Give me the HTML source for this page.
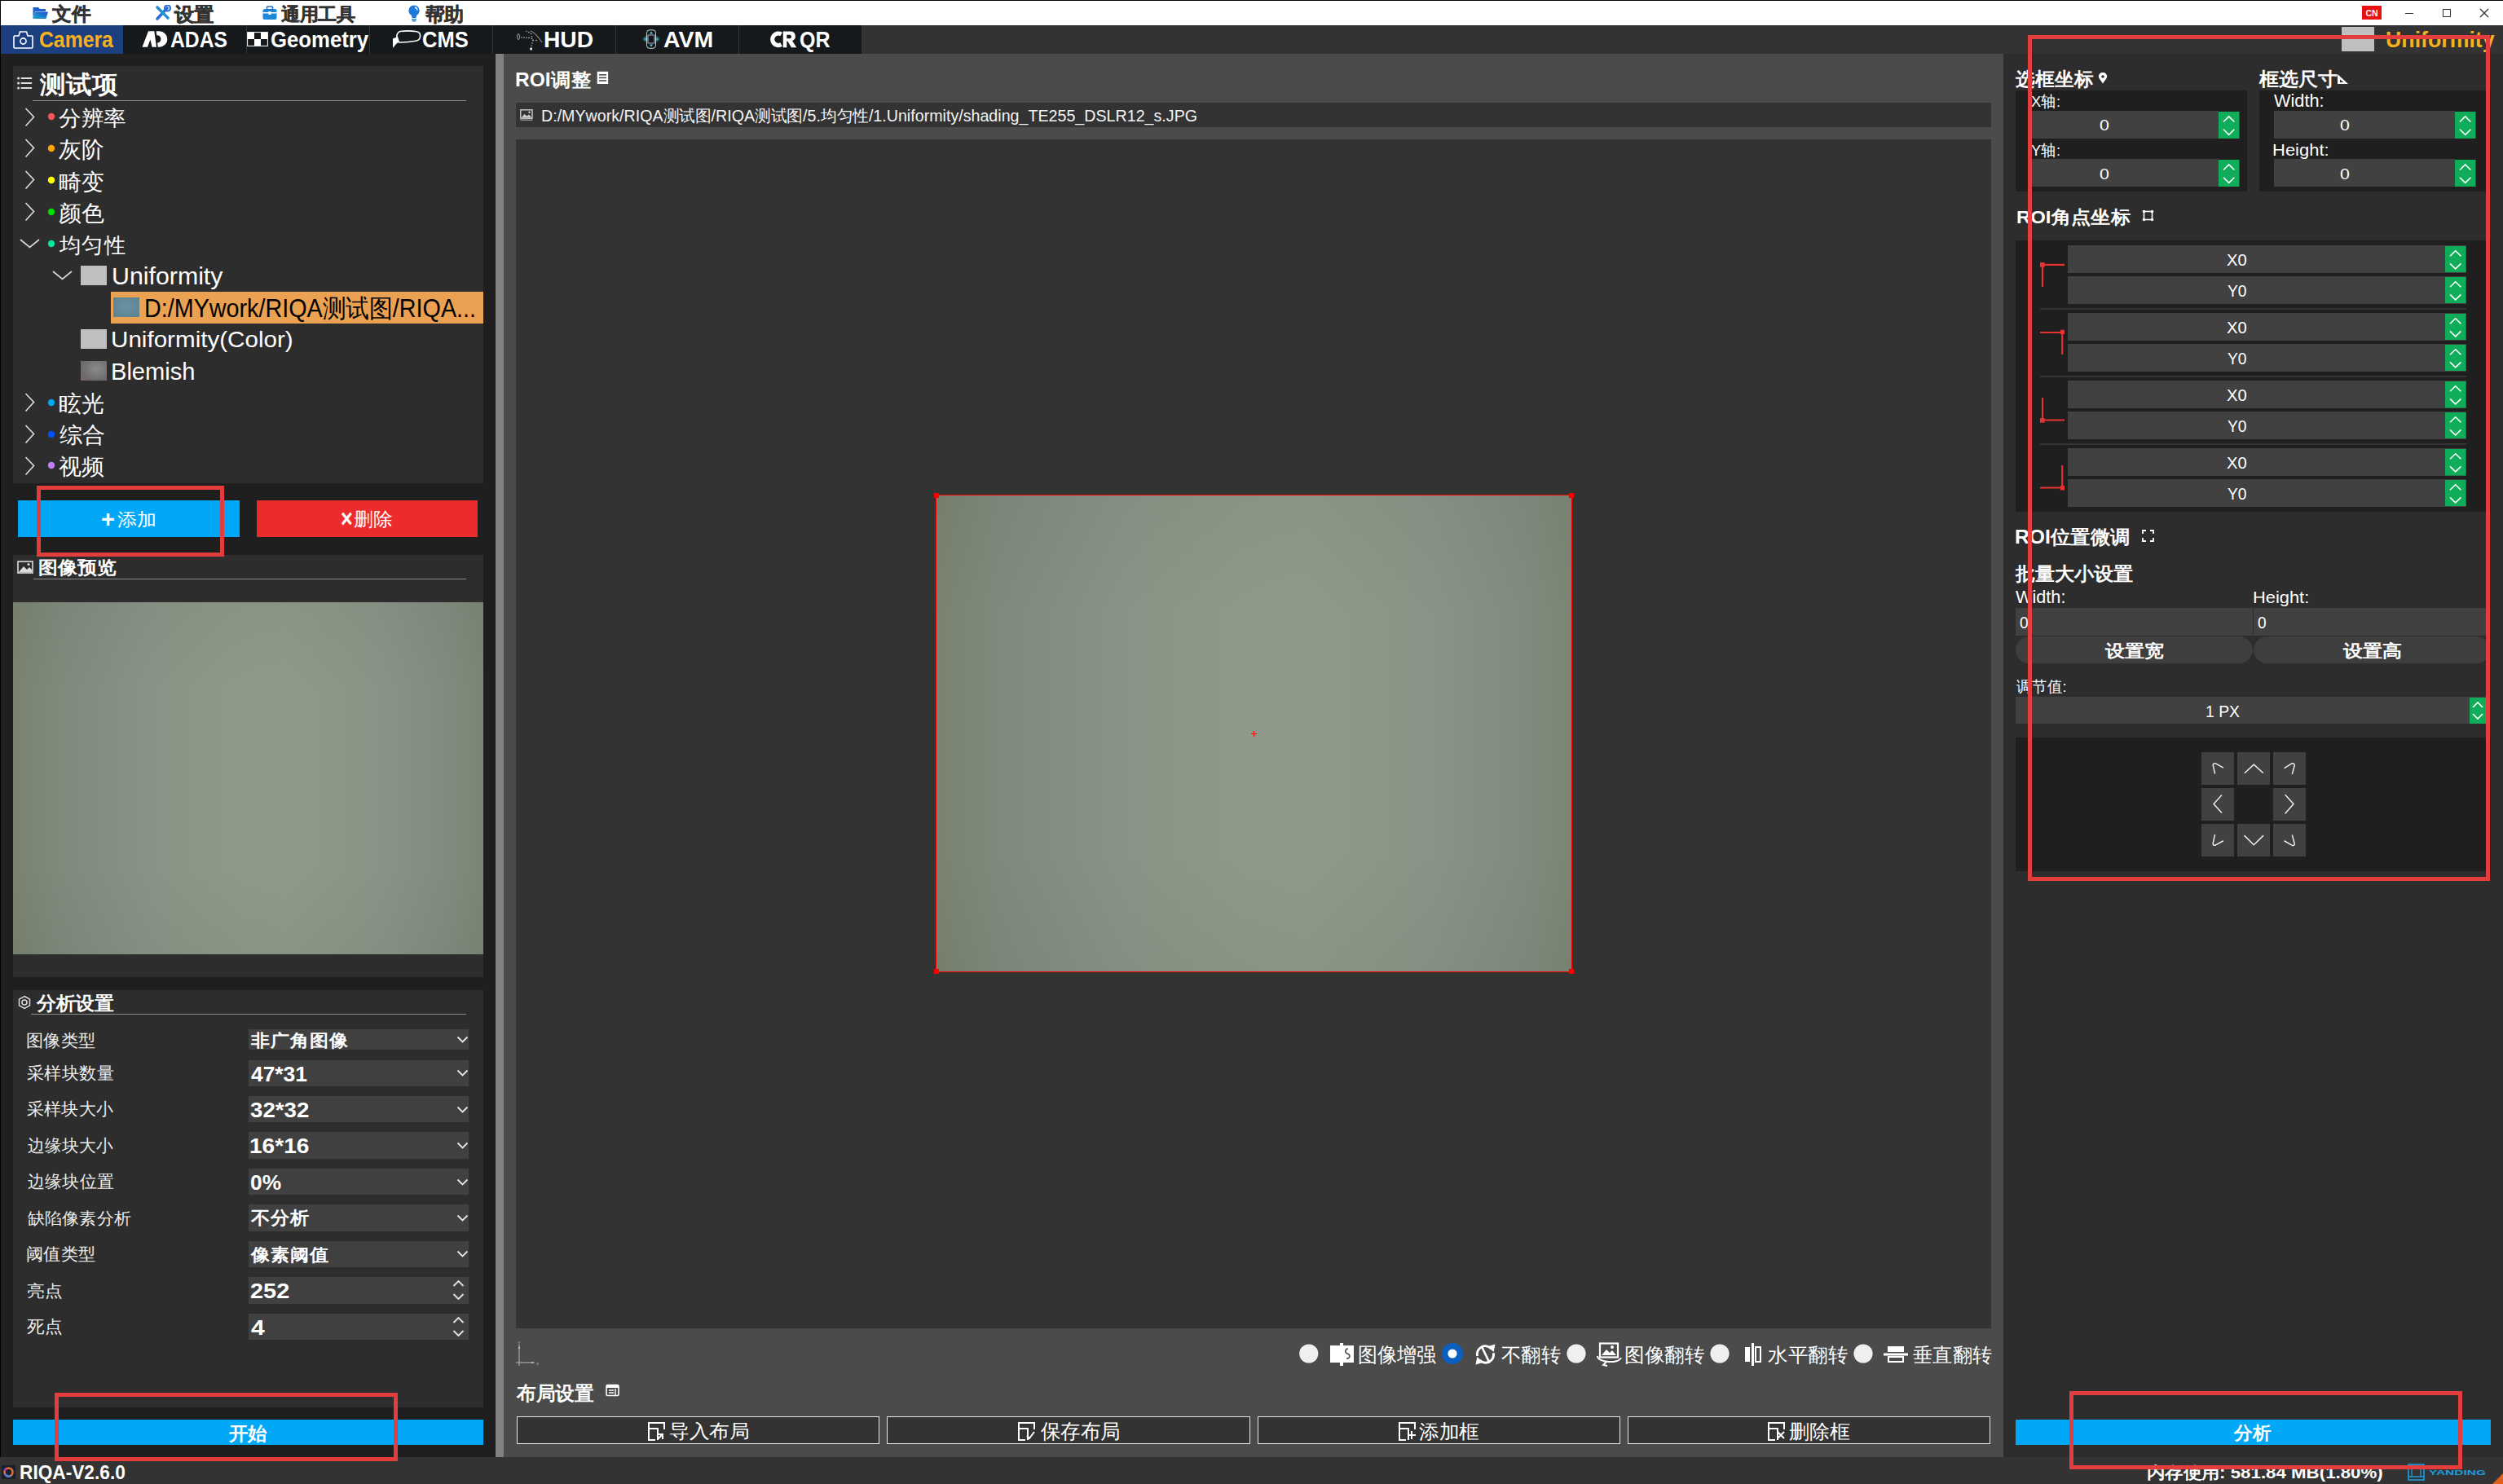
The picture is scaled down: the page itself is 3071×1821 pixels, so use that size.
<!DOCTYPE html>
<html><head><meta charset="utf-8">
<style>
*{box-sizing:border-box;margin:0;padding:0}
html,body{width:3071px;height:1821px;overflow:hidden;background:#1f1f1f;font-family:"Liberation Sans",sans-serif;color:#fff}
.a{position:absolute;display:block}
.t{position:absolute;white-space:nowrap;line-height:1;transform-origin:0 0;font-family:"Liberation Sans",sans-serif}
</style></head><body>
<div class="a" style="left:0px;top:0px;width:3071px;height:1px;background:#000;"></div>
<div class="a" style="left:0px;top:0px;width:1px;height:1788px;background:#000;"></div>
<div class="a" style="left:1px;top:1px;width:3070px;height:30px;background:#fff;"></div>
<div class="a" style="left:1px;top:31px;width:3070px;height:35px;background:#333333;"></div>
<div class="a" style="left:1px;top:31px;width:1056px;height:35px;background:#15191c;"></div>
<div class="a" style="left:1px;top:31px;width:150px;height:35px;background:#1c3f80;"></div>
<div class="a" style="left:302px;top:31px;width:1px;height:35px;background:#30363a;"></div>
<div class="a" style="left:453px;top:31px;width:1px;height:35px;background:#30363a;"></div>
<div class="a" style="left:604px;top:31px;width:1px;height:35px;background:#30363a;"></div>
<div class="a" style="left:755px;top:31px;width:1px;height:35px;background:#30363a;"></div>
<div class="a" style="left:906px;top:31px;width:1px;height:35px;background:#30363a;"></div>
<div class="a" style="left:1px;top:66px;width:607px;height:1722px;background:#1f1f1f;"></div>
<div class="a" style="left:16px;top:81px;width:577px;height:512px;background:#2d2d2d;"></div>
<div class="a" style="left:22px;top:614px;width:272px;height:45px;background:#02a8f8;"></div>
<div class="a" style="left:315px;top:614px;width:271px;height:45px;background:#ec2c2c;"></div>
<div class="a" style="left:16px;top:681px;width:577px;height:518px;background:#2d2d2d;"></div>
<div class="a" style="left:16px;top:739px;width:577px;height:432px;background:linear-gradient(180deg,rgba(60,60,50,0.06) 0%,rgba(0,0,0,0) 25%,rgba(0,0,0,0) 75%,rgba(60,60,50,0.06) 100%),linear-gradient(90deg,#79836f 0%,#808a7c 10%,#8a9486 30%,#8e9989 48%,#8f9a8a 58%,#8a9486 78%,#828c7e 92%,#7b8576 100%);"></div>
<div class="a" style="left:16px;top:1215px;width:577px;height:512px;background:#2d2d2d;"></div>
<div class="a" style="left:16px;top:1742px;width:577px;height:31px;background:#02a8f8;"></div>
<div class="a" style="left:608px;top:66px;width:10px;height:1722px;background:#818181;"></div>
<div class="a" style="left:618px;top:66px;width:1840px;height:1722px;background:#4b4b4b;"></div>
<div class="a" style="left:633px;top:126px;width:1810px;height:30px;background:#333;"></div>
<div class="a" style="left:633px;top:171px;width:1810px;height:1459px;background:#333;"></div>
<div class="a" style="left:2458px;top:66px;width:613px;height:1722px;background:#2d2d2d;"></div>
<div class="a" style="left:2473px;top:1742px;width:583px;height:31px;background:#02a8f8;"></div>
<div class="a" style="left:0px;top:1788px;width:3071px;height:33px;background:#333;"></div>
<div class="t" style="left:63.50px;top:6.00px;font-size:23.0px;font-weight:bold;color:#333;transform:scale(1.0261,1.0000);-webkit-text-stroke:0.5px #333">文件</div>
<div class="t" style="left:214.00px;top:6.50px;font-size:23.0px;font-weight:bold;color:#333;transform:scale(1.0370,1.0227);-webkit-text-stroke:0.5px #333">设置</div>
<div class="t" style="left:344.60px;top:7.48px;font-size:22.0px;font-weight:bold;color:#333;transform:scale(1.0273,0.9783);-webkit-text-stroke:0.5px #333">通用工具</div>
<div class="t" style="left:521.70px;top:6.50px;font-size:23.0px;font-weight:bold;color:#333;transform:scale(1.0178,1.0227);-webkit-text-stroke:0.5px #333">帮助</div>
<div class="t" style="left:48.10px;top:35.00px;font-size:27.5px;font-weight:bold;color:#f5b21b;transform:scale(0.9000,1.0000);">Camera</div>
<div class="t" style="left:209.49px;top:36.43px;font-size:27.0px;font-weight:bold;color:#fff;transform:scale(0.9147,0.9895);">ADAS</div>
<div class="t" style="left:331.75px;top:36.43px;font-size:27.0px;font-weight:bold;color:#fff;transform:scale(0.9528,0.9895);">Geometry</div>
<div class="t" style="left:517.65px;top:36.43px;font-size:27.0px;font-weight:bold;color:#fff;transform:scale(0.9466,0.9895);">CMS</div>
<div class="t" style="left:666.91px;top:36.43px;font-size:27.0px;font-weight:bold;color:#fff;transform:scale(1.0436,0.9895);">HUD</div>
<div class="t" style="left:814.23px;top:35.76px;font-size:26.5px;font-weight:bold;color:#fff;transform:scale(1.0741,1.0111);">AVM</div>
<div class="t" style="left:980.66px;top:35.76px;font-size:26.5px;font-weight:bold;color:#fff;transform:scale(0.9447,1.0111);">QR</div>
<div class="t" style="left:49.40px;top:89.20px;font-size:30.0px;font-weight:bold;color:#fff;transform:scale(1.0600,1.0067);">测试项</div>
<div class="a" style="left:40px;top:123px;width:532px;height:1px;background:#8c8c8c;"></div>
<svg class="a" style="left:20px;top:94px" width="20" height="16" viewBox="0 0 20 16"><g fill="#ddd"><circle cx="2.6" cy="2" r="1.5"/><circle cx="2.6" cy="8" r="1.5"/><circle cx="2.6" cy="14" r="1.5"/><rect x="5.6" y="1" width="13.5" height="2"/><rect x="5.6" y="7" width="13.5" height="2"/><rect x="5.6" y="13" width="13.5" height="2"/></g></svg>
<div class="t" style="left:71.97px;top:132.76px;font-size:26.5px;font-weight:normal;color:#fff;transform:scale(1.0253,0.9630);">分辨率</div>
<svg class="a" style="left:58px;top:138.0px" width="10" height="10" viewBox="0 0 10 10"><circle cx="5" cy="5" r="4.2" fill="#f25757"/></svg>
<svg class="a" style="left:30px;top:131.5px" width="13" height="24" viewBox="0 0 13 24"><path d="M1.5,1 L11.5,11.5 L1.5,22.5" fill="none" stroke="#d8d8d8" stroke-width="1.7"/></svg>
<div class="t" style="left:72.01px;top:169.75px;font-size:28.0px;font-weight:normal;color:#fff;transform:scale(0.9889,1.0000);">灰阶</div>
<svg class="a" style="left:58px;top:176.95px" width="10" height="10" viewBox="0 0 10 10"><circle cx="5" cy="5" r="4.2" fill="#ffa500"/></svg>
<svg class="a" style="left:30px;top:170.45px" width="13" height="24" viewBox="0 0 13 24"><path d="M1.5,1 L11.5,11.5 L1.5,22.5" fill="none" stroke="#d8d8d8" stroke-width="1.7"/></svg>
<div class="t" style="left:71.97px;top:209.70px;font-size:27.0px;font-weight:normal;color:#fff;transform:scale(1.0308,1.0400);">畸变</div>
<svg class="a" style="left:58px;top:215.9px" width="10" height="10" viewBox="0 0 10 10"><circle cx="5" cy="5" r="4.2" fill="#ffff00"/></svg>
<svg class="a" style="left:30px;top:209.4px" width="13" height="24" viewBox="0 0 13 24"><path d="M1.5,1 L11.5,11.5 L1.5,22.5" fill="none" stroke="#d8d8d8" stroke-width="1.7"/></svg>
<div class="t" style="left:71.96px;top:248.65px;font-size:26.5px;font-weight:normal;color:#fff;transform:scale(1.0385,1.0000);">颜色</div>
<svg class="a" style="left:58px;top:254.85000000000002px" width="10" height="10" viewBox="0 0 10 10"><circle cx="5" cy="5" r="4.2" fill="#00e000"/></svg>
<svg class="a" style="left:30px;top:248.35000000000002px" width="13" height="24" viewBox="0 0 13 24"><path d="M1.5,1 L11.5,11.5 L1.5,22.5" fill="none" stroke="#d8d8d8" stroke-width="1.7"/></svg>
<div class="t" style="left:73.00px;top:287.60px;font-size:27.5px;font-weight:normal;color:#fff;transform:scale(0.9759,0.9630);">均匀性</div>
<svg class="a" style="left:58px;top:293.8px" width="10" height="10" viewBox="0 0 10 10"><circle cx="5" cy="5" r="4.2" fill="#00e8a0"/></svg>
<svg class="a" style="left:24px;top:293.3px" width="25" height="12" viewBox="0 0 25 12"><path d="M1,1 L12.5,10.5 L24,1" fill="none" stroke="#d8d8d8" stroke-width="1.7"/></svg>
<div class="t" style="left:71.96px;top:482.35px;font-size:27.0px;font-weight:normal;color:#fff;transform:scale(1.0385,1.0400);">眩光</div>
<svg class="a" style="left:58px;top:488.55px" width="10" height="10" viewBox="0 0 10 10"><circle cx="5" cy="5" r="4.2" fill="#00a8f0"/></svg>
<svg class="a" style="left:30px;top:482.05px" width="13" height="24" viewBox="0 0 13 24"><path d="M1.5,1 L11.5,11.5 L1.5,22.5" fill="none" stroke="#d8d8d8" stroke-width="1.7"/></svg>
<div class="t" style="left:73.00px;top:521.30px;font-size:27.0px;font-weight:normal;color:#fff;transform:scale(1.0385,1.0000);">综合</div>
<svg class="a" style="left:58px;top:527.5px" width="10" height="10" viewBox="0 0 10 10"><circle cx="5" cy="5" r="4.2" fill="#0050ff"/></svg>
<svg class="a" style="left:30px;top:521.0px" width="13" height="24" viewBox="0 0 13 24"><path d="M1.5,1 L11.5,11.5 L1.5,22.5" fill="none" stroke="#d8d8d8" stroke-width="1.7"/></svg>
<div class="t" style="left:71.96px;top:560.25px;font-size:26.5px;font-weight:normal;color:#fff;transform:scale(1.0385,1.0000);">视频</div>
<svg class="a" style="left:58px;top:566.45px" width="10" height="10" viewBox="0 0 10 10"><circle cx="5" cy="5" r="4.2" fill="#c080f0"/></svg>
<svg class="a" style="left:30px;top:559.95px" width="13" height="24" viewBox="0 0 13 24"><path d="M1.5,1 L11.5,11.5 L1.5,22.5" fill="none" stroke="#d8d8d8" stroke-width="1.7"/></svg>
<svg class="a" style="left:64px;top:331.5px" width="25" height="12" viewBox="0 0 25 12"><path d="M1,1 L12.5,10.5 L24,1" fill="none" stroke="#d8d8d8" stroke-width="1.7"/></svg>
<div class="a" style="left:99px;top:326px;width:32px;height:24px;background:#c0c0c0;"></div>
<div class="t" style="left:136.51px;top:324.14px;font-size:30.5px;font-weight:normal;color:#fff;transform:scale(0.9941,0.9533);">Uniformity</div>
<div class="a" style="left:136px;top:358px;width:457px;height:39px;background:#eba152;"></div>
<div class="a" style="left:139px;top:365px;width:32px;height:24px;background:radial-gradient(ellipse at 50% 45%,#6b93a6,#58808f);"></div>
<div class="t" style="left:177.38px;top:362.55px;font-size:30.0px;font-weight:normal;color:#000;transform:scale(0.9576,1.0300);">D:/MYwork/RIQA测试图/RIQA...</div>
<div class="a" style="left:99px;top:404.3px;width:32px;height:23.7px;background:#c0c0c0;"></div>
<div class="t" style="left:136.46px;top:403.36px;font-size:29.0px;font-weight:normal;color:#fff;transform:scale(1.0209,0.9679);">Uniformity(Color)</div>
<div class="a" style="left:99px;top:443px;width:32px;height:24px;background:radial-gradient(ellipse at 60% 40%,#8a8a8a,#6e6a6a 70%,#7a6666);"></div>
<div class="t" style="left:135.69px;top:440.71px;font-size:31.0px;font-weight:normal;color:#fff;transform:scale(0.9381,0.9727);">Blemish</div>
<div class="t" style="left:124.00px;top:622.89px;font-size:29.0px;font-weight:bold;color:#fff;transform:scale(1.0000,0.9867);">+</div>
<div class="t" style="left:143.94px;top:627.47px;font-size:22.5px;font-weight:normal;color:#fff;transform:scale(1.0628,0.9727);">添加</div>
<div class="t" style="left:417.71px;top:621.38px;font-size:28.5px;font-weight:bold;color:#fff;transform:scale(0.8857,1.0769);">×</div>
<div class="t" style="left:434.45px;top:626.50px;font-size:22.5px;font-weight:normal;color:#fff;transform:scale(1.0523,1.0190);">删除</div>
<svg class="a" style="left:21px;top:688px" width="20" height="16" viewBox="0 0 20 16"><rect x="1" y="1" width="18" height="14" fill="none" stroke="#ddd" stroke-width="1.6"/><path d="M2,14 L8,7 L12,11 L15,8 L18,11 L18,14 Z" fill="#ddd"/><circle cx="14" cy="4.5" r="1.5" fill="#ddd"/></svg>
<div class="t" style="left:47.25px;top:685.50px;font-size:23.0px;font-weight:bold;color:#fff;transform:scale(1.0484,0.9696);">图像预览</div>
<div class="a" style="left:41px;top:710px;width:531px;height:1px;background:#8c8c8c;"></div>
<svg class="a" style="left:21px;top:1221px" width="18" height="18" viewBox="0 0 18 18"><path d="M9,1.5 L15.5,5.2 L15.5,12.8 L9,16.5 L2.5,12.8 L2.5,5.2 Z" fill="none" stroke="#ddd" stroke-width="1.5"/><circle cx="9" cy="9" r="3" fill="none" stroke="#ddd" stroke-width="1.5"/></svg>
<div class="t" style="left:45.40px;top:1219.70px;font-size:23.0px;font-weight:bold;color:#fff;transform:scale(1.0326,0.9957);">分析设置</div>
<div class="a" style="left:38px;top:1244px;width:534px;height:1px;background:#8c8c8c;"></div>
<div class="t" style="left:32.06px;top:1265.79px;font-size:21.0px;font-weight:normal;color:#ececec;transform:scale(1.0198,1.0100);">图像类型</div>
<div class="a" style="left:305px;top:1263px;width:270px;height:25px;background:#404040;"></div>
<div class="t" style="left:308.00px;top:1267.30px;font-size:22.5px;font-weight:bold;color:#fff;transform:scale(1.0391,0.9500);">非广角图像</div>
<svg class="a" style="left:560px;top:1271.0px" width="15" height="10" viewBox="0 0 15 10"><path d="M1.5,1.5 L7.5,7.5 L13.5,1.5" fill="none" stroke="#e6e6e6" stroke-width="1.8"/></svg>
<div class="t" style="left:33.08px;top:1305.99px;font-size:21.0px;font-weight:normal;color:#ececec;transform:scale(1.0184,1.0100);">采样块数量</div>
<div class="a" style="left:305px;top:1300.5px;width:270px;height:32.5px;background:#404040;"></div>
<div class="t" style="left:308.30px;top:1304.56px;font-size:27.0px;font-weight:bold;color:#fff;transform:scale(0.9771,0.9789);">47*31</div>
<svg class="a" style="left:560px;top:1312.2px" width="15" height="10" viewBox="0 0 15 10"><path d="M1.5,1.5 L7.5,7.5 L13.5,1.5" fill="none" stroke="#e6e6e6" stroke-width="1.8"/></svg>
<div class="t" style="left:33.09px;top:1350.39px;font-size:21.0px;font-weight:normal;color:#ececec;transform:scale(1.0087,1.0100);">采样块大小</div>
<div class="a" style="left:305px;top:1344.9px;width:270px;height:32.5px;background:#404040;"></div>
<div class="t" style="left:307.28px;top:1348.96px;font-size:27.0px;font-weight:bold;color:#fff;transform:scale(1.0246,0.9789);">32*32</div>
<svg class="a" style="left:560px;top:1356.6px" width="15" height="10" viewBox="0 0 15 10"><path d="M1.5,1.5 L7.5,7.5 L13.5,1.5" fill="none" stroke="#e6e6e6" stroke-width="1.8"/></svg>
<div class="t" style="left:34.10px;top:1394.89px;font-size:21.0px;font-weight:normal;color:#ececec;transform:scale(0.9990,1.0100);">边缘块大小</div>
<div class="a" style="left:305px;top:1389.3px;width:270px;height:32.5px;background:#404040;"></div>
<div class="t" style="left:306.22px;top:1393.46px;font-size:27.0px;font-weight:bold;color:#fff;transform:scale(1.0397,0.9789);">16*16</div>
<svg class="a" style="left:560px;top:1401.0px" width="15" height="10" viewBox="0 0 15 10"><path d="M1.5,1.5 L7.5,7.5 L13.5,1.5" fill="none" stroke="#e6e6e6" stroke-width="1.8"/></svg>
<div class="t" style="left:34.10px;top:1439.29px;font-size:21.0px;font-weight:normal;color:#ececec;transform:scale(1.0087,1.0100);">边缘块位置</div>
<div class="a" style="left:305px;top:1433.8px;width:270px;height:32.5px;background:#404040;"></div>
<div class="t" style="left:307.32px;top:1437.86px;font-size:27.0px;font-weight:bold;color:#fff;transform:scale(0.9757,0.9789);">0%</div>
<svg class="a" style="left:560px;top:1445.5px" width="15" height="10" viewBox="0 0 15 10"><path d="M1.5,1.5 L7.5,7.5 L13.5,1.5" fill="none" stroke="#e6e6e6" stroke-width="1.8"/></svg>
<div class="t" style="left:34.10px;top:1484.70px;font-size:21.0px;font-weight:normal;color:#ececec;transform:scale(1.0064,0.9619);">缺陷像素分析</div>
<div class="a" style="left:305px;top:1478.2px;width:270px;height:32.6px;background:#404040;"></div>
<div class="t" style="left:308.00px;top:1484.25px;font-size:23.5px;font-weight:bold;color:#fff;transform:scale(1.0000,0.9500);">不分析</div>
<svg class="a" style="left:560px;top:1490.0px" width="15" height="10" viewBox="0 0 15 10"><path d="M1.5,1.5 L7.5,7.5 L13.5,1.5" fill="none" stroke="#e6e6e6" stroke-width="1.8"/></svg>
<div class="t" style="left:32.16px;top:1530.16px;font-size:21.5px;font-weight:normal;color:#ececec;transform:scale(0.9718,0.9619);">阈值类型</div>
<div class="a" style="left:305px;top:1522.7px;width:270px;height:32.5px;background:#404040;"></div>
<div class="t" style="left:308.00px;top:1529.70px;font-size:22.5px;font-weight:bold;color:#fff;transform:scale(1.0435,0.9500);">像素阈值</div>
<svg class="a" style="left:560px;top:1534.4px" width="15" height="10" viewBox="0 0 15 10"><path d="M1.5,1.5 L7.5,7.5 L13.5,1.5" fill="none" stroke="#e6e6e6" stroke-width="1.8"/></svg>
<div class="t" style="left:33.01px;top:1573.60px;font-size:20.0px;font-weight:normal;color:#ececec;transform:scale(1.0921,1.0100);">亮点</div>
<div class="a" style="left:305px;top:1567.2px;width:270px;height:32.5px;background:#404040;"></div>
<div class="t" style="left:307.23px;top:1571.16px;font-size:27.0px;font-weight:bold;color:#fff;transform:scale(1.0698,0.9789);">252</div>
<svg class="a" style="left:555px;top:1570.4px" width="15" height="26" viewBox="0 0 15 26"><path d="M1.5,8 L7.5,2 L13.5,8 M1.5,18 L7.5,24 L13.5,18" fill="none" stroke="#e6e6e6" stroke-width="1.8"/></svg>
<div class="t" style="left:33.06px;top:1618.00px;font-size:20.5px;font-weight:normal;color:#ececec;transform:scale(1.0375,1.0100);">死点</div>
<div class="a" style="left:305px;top:1611.6px;width:270px;height:32.5px;background:#404040;"></div>
<div class="t" style="left:308.30px;top:1615.56px;font-size:27.0px;font-weight:bold;color:#fff;transform:scale(1.1133,0.9789);">4</div>
<svg class="a" style="left:555px;top:1614.8px" width="15" height="26" viewBox="0 0 15 26"><path d="M1.5,8 L7.5,2 L13.5,8 M1.5,18 L7.5,24 L13.5,18" fill="none" stroke="#e6e6e6" stroke-width="1.8"/></svg>
<div class="t" style="left:280.80px;top:1748.00px;font-size:22.0px;font-weight:bold;color:#fff;transform:scale(1.0614,1.0381);">开始</div>
<div class="t" style="left:632.11px;top:87.19px;font-size:23.5px;font-weight:bold;color:#fff;transform:scale(1.0443,0.9913);">ROI调整</div>
<svg class="a" style="left:732px;top:87px" width="15" height="17" viewBox="0 0 15 17"><rect x="0.7" y="0.8" width="13.4" height="15.2" fill="#fff"/><rect x="3" y="4" width="9" height="1.6" fill="#4b4b4b"/><rect x="3" y="7.6" width="9" height="1.6" fill="#4b4b4b"/><rect x="3" y="11.2" width="9" height="1.6" fill="#4b4b4b"/></svg>
<svg class="a" style="left:638px;top:134px" width="16" height="14" viewBox="0 0 16 14"><rect x="0.8" y="0.8" width="14.2" height="10.4" fill="none" stroke="#ccc" stroke-width="1.4"/><path d="M1.5,10.5 L5.5,6 L8.5,8.5 L11,6.5 L14.5,10.5 Z" fill="#ccc"/><circle cx="11.5" cy="3.8" r="1.2" fill="#ccc"/><rect x="0.5" y="12.6" width="15" height="1.2" fill="#aaa"/></svg>
<div class="t" style="left:664.23px;top:132.02px;font-size:20.0px;font-weight:normal;color:#f4f4f4;transform:scale(0.9828,0.9929);">D:/MYwork/RIQA测试图/RIQA测试图/5.均匀性/1.Uniformity/shading_TE255_DSLR12_s.JPG</div>
<div class="a" style="left:1149px;top:608px;width:779px;height:584px;background:linear-gradient(180deg,rgba(60,60,50,0.06) 0%,rgba(0,0,0,0) 25%,rgba(0,0,0,0) 75%,rgba(60,60,50,0.06) 100%),linear-gradient(90deg,#79836f 0%,#808a7c 10%,#8a9486 30%,#8e9989 48%,#8f9a8a 58%,#8a9486 78%,#828c7e 92%,#7b8576 100%);"></div>
<div class="a" style="left:1148px;top:607px;width:781px;height:586px;border:1px solid #ff0000"></div>
<div class="a" style="left:1146px;top:605px;width:6px;height:6px;background:#ff0000;"></div>
<div class="a" style="left:1925px;top:605px;width:6px;height:6px;background:#ff0000;"></div>
<div class="a" style="left:1146px;top:1189px;width:6px;height:6px;background:#ff0000;"></div>
<div class="a" style="left:1925px;top:1189px;width:6px;height:6px;background:#ff0000;"></div>
<div class="a" style="left:1535px;top:900px;width:7px;height:1px;background:#ff0000;"></div>
<div class="a" style="left:1538px;top:897px;width:1px;height:7px;background:#ff0000;"></div>
<svg class="a" style="left:632px;top:1645px" width="32" height="32" viewBox="0 0 32 32"><g stroke="#b8b8b8" stroke-width="1" fill="none"><path d="M5,5 L5,31 M1,27 L24,27"/></g><circle cx="5" cy="9" r="1.2" fill="#b8b8b8"/><circle cx="21" cy="27" r="1.2" fill="#b8b8b8"/><text x="3" y="5" font-size="5" fill="#b8b8b8" font-family="Liberation Sans">Y</text><text x="26" y="30" font-size="6" fill="#b8b8b8" font-family="Liberation Sans">x</text></svg>
<svg class="a" style="left:1593px;top:1649px" width="26" height="26" viewBox="0 0 26 26"><circle cx="12.8" cy="12" r="11.6" fill="#efefef"/></svg>
<svg class="a" style="left:1631px;top:1647px" width="31" height="30" viewBox="0 0 31 30"><rect x="1" y="4" width="29" height="21" fill="#fff"/><rect x="13" y="1" width="4" height="28" fill="#fff"/><path d="M23,8 C19,8 19,13 22,14 C26,15 26,20 21,20" fill="none" stroke="#4b4b4b" stroke-width="1.6"/></svg>
<div class="t" style="left:1666.07px;top:1651.30px;font-size:24.5px;font-weight:normal;color:#fff;transform:scale(0.9643,1.0043);">图像增强</div>
<svg class="a" style="left:1768px;top:1647px" width="28" height="28" viewBox="0 0 28 28"><circle cx="14" cy="14" r="13" fill="#0a5fbf"/><circle cx="14" cy="14" r="5.6" fill="#fff"/></svg>
<svg class="a" style="left:1809px;top:1647px" width="27" height="30" viewBox="0 0 27 30"><path d="M3.6,17 A10,10 0 0 1 20.6,7.9 M23.4,13.3 A10,10 0 0 1 6.4,22.1" fill="none" stroke="#fff" stroke-width="3"/><path d="M16.2,5.2 L25.5,2.5 L23.6,12 Z M10.8,24.8 L1.5,27.5 L3.4,18 Z" fill="#fff"/><path d="M8.8,5 L18.6,25.5" stroke="#fff" stroke-width="2.6"/></svg>
<div class="t" style="left:1842.28px;top:1651.30px;font-size:24.0px;font-weight:normal;color:#fff;transform:scale(1.0186,1.0043);">不翻转</div>
<svg class="a" style="left:1921px;top:1649px" width="26" height="26" viewBox="0 0 26 26"><circle cx="13" cy="12" r="11.6" fill="#efefef"/></svg>
<svg class="a" style="left:1958px;top:1647px" width="33" height="30" viewBox="0 0 33 30"><rect x="5" y="1.5" width="22" height="17" fill="none" stroke="#fff" stroke-width="2.2"/><path d="M7,16 L13,9 L17,13 L20,10 L25,16 Z" fill="#fff"/><circle cx="20" cy="6" r="2" fill="#fff"/><path d="M2,17 C2,25 28,27 31,19" fill="none" stroke="#fff" stroke-width="2"/><path d="M13,24 L9,28 L14,29" fill="none" stroke="#fff" stroke-width="1.8"/></svg>
<div class="t" style="left:1992.94px;top:1651.30px;font-size:24.0px;font-weight:normal;color:#fff;transform:scale(1.0290,1.0043);">图像翻转</div>
<svg class="a" style="left:2097px;top:1649px" width="26" height="26" viewBox="0 0 26 26"><circle cx="13" cy="12" r="11.6" fill="#efefef"/></svg>
<svg class="a" style="left:2140px;top:1647px" width="22" height="30" viewBox="0 0 22 30"><rect x="1" y="6" width="6" height="18" fill="#fff"/><rect x="9" y="1" width="3" height="28" fill="#fff"/><rect x="14" y="6" width="6" height="18" fill="none" stroke="#fff" stroke-width="2"/></svg>
<div class="t" style="left:2169.47px;top:1651.30px;font-size:24.0px;font-weight:normal;color:#fff;transform:scale(1.0266,1.0043);">水平翻转</div>
<svg class="a" style="left:2273px;top:1649px" width="26" height="26" viewBox="0 0 26 26"><circle cx="13" cy="12" r="11.6" fill="#efefef"/></svg>
<svg class="a" style="left:2310px;top:1650px" width="32" height="24" viewBox="0 0 32 24"><rect x="6" y="2" width="20" height="7" fill="#fff"/><rect x="1" y="10.5" width="30" height="3" fill="#fff"/><rect x="7" y="15" width="18" height="6" fill="none" stroke="#fff" stroke-width="2"/></svg>
<div class="t" style="left:2347.00px;top:1651.30px;font-size:24.0px;font-weight:normal;color:#fff;transform:scale(1.0105,1.0043);">垂直翻转</div>
<div class="t" style="left:633.80px;top:1698.80px;font-size:23.5px;font-weight:bold;color:#fff;transform:scale(0.9865,1.0000);">布局设置</div>
<svg class="a" style="left:743px;top:1698px" width="17" height="17" viewBox="0 0 17 17"><rect x="1" y="1.5" width="15" height="13" rx="1.5" fill="none" stroke="#fff" stroke-width="1.6"/><rect x="1" y="1.5" width="15" height="3.5" fill="#fff"/><path d="M4,8 L10,8 M4,11 L10,11 M12,6 L12,14" stroke="#fff" stroke-width="1.4"/></svg>
<div class="a" style="left:634px;top:1738px;width:445px;height:34px;background:#333;border:1.5px solid #e8e8e8"></div>
<svg class="a" style="left:793.7px;top:1743px" width="24" height="26" viewBox="0 0 24 26"><path d="M10,24 L2,24 L2,3 L21,3 L21,11 M2,10 L13,10 L13,24" fill="none" stroke="#fff" stroke-width="2"/><path d="M13,23 L19,17 M13,17 L19,17 L19,23" fill="none" stroke="#fff" stroke-width="2"/></svg>
<div class="t" style="left:820.67px;top:1745.96px;font-size:23.5px;font-weight:normal;color:#fff;transform:scale(1.0312,0.9583);">导入布局</div>
<div class="a" style="left:1088px;top:1738px;width:446px;height:34px;background:#333;border:1.5px solid #e8e8e8"></div>
<svg class="a" style="left:1248.3px;top:1743px" width="24" height="26" viewBox="0 0 24 26"><path d="M10,24 L2,24 L2,3 L21,3 L21,11 M2,10 L13,10 L13,24" fill="none" stroke="#fff" stroke-width="2"/><path d="M12,19 L15,22 L21,14" fill="none" stroke="#fff" stroke-width="2"/></svg>
<div class="t" style="left:1277.00px;top:1745.00px;font-size:24.5px;font-weight:normal;color:#fff;transform:scale(0.9796,1.0000);">保存布局</div>
<div class="a" style="left:1543px;top:1738px;width:445px;height:34px;background:#333;border:1.5px solid #e8e8e8"></div>
<svg class="a" style="left:1714.8px;top:1743px" width="24" height="26" viewBox="0 0 24 26"><path d="M10,24 L2,24 L2,3 L21,3 L21,11 M2,10 L13,10 L13,24" fill="none" stroke="#fff" stroke-width="2"/><path d="M12,18 L22,18 M17,13 L17,23" fill="none" stroke="#fff" stroke-width="2"/></svg>
<div class="t" style="left:1741.37px;top:1745.00px;font-size:24.0px;font-weight:normal;color:#fff;transform:scale(1.0300,1.0000);">添加框</div>
<div class="a" style="left:1997px;top:1738px;width:445px;height:34px;background:#333;border:1.5px solid #e8e8e8"></div>
<svg class="a" style="left:2168px;top:1743px" width="24" height="26" viewBox="0 0 24 26"><path d="M10,24 L2,24 L2,3 L21,3 L21,11 M2,10 L13,10 L13,24" fill="none" stroke="#fff" stroke-width="2"/><path d="M13,14 L21,22 M21,14 L13,22" fill="none" stroke="#fff" stroke-width="2"/></svg>
<div class="t" style="left:2194.96px;top:1745.00px;font-size:24.0px;font-weight:normal;color:#fff;transform:scale(1.0429,1.0000);">删除框</div>
<div class="a" style="left:2873px;top:33px;width:40px;height:30px;background:#c0c0c0;"></div>
<div class="t" style="left:2927.36px;top:35.20px;font-size:27.5px;font-weight:bold;color:#f5b21b;transform:scale(0.9719,1.0000);">Uniformity</div>
<div class="t" style="left:2473.40px;top:86.77px;font-size:23.5px;font-weight:bold;color:#fff;transform:scale(0.9948,0.9667);">选框坐标</div>
<svg class="a" style="left:2574px;top:89px" width="12" height="14" viewBox="0 0 12 14"><path d="M6,13.5 L1.8,7.5 A5,5 0 1 1 10.2,7.5 Z" fill="#fff"/><circle cx="6" cy="5" r="1.8" fill="#2e2e2e"/></svg>
<div class="t" style="left:2772.20px;top:86.77px;font-size:23.5px;font-weight:bold;color:#fff;transform:scale(1.0031,0.9667);">框选尺寸</div>
<svg class="a" style="left:2867px;top:89px" width="15" height="15" viewBox="0 0 15 15"><path d="M1,2 L14,14 L1,14 Z" fill="#fff"/><path d="M4,8.5 L8.5,12 L4,12 Z" fill="#2e2e2e"/></svg>
<div class="a" style="left:2473px;top:111px;width:284px;height:124px;background:#1f1f1f;"></div>
<div class="a" style="left:2491px;top:136px;width:231px;height:33.5px;background:#414141;"></div>
<svg class="a" style="left:2722px;top:136.5px" width="26" height="33" viewBox="0 0 26 33"><rect x="0" y="0" width="25.5" height="33" fill="#0fad5a"/><path d="M6,12.5 L12.7,5.9 L19.4,12.5 M6,21.8 L12.7,28.4 L19.4,21.8" fill="none" stroke="#fff" stroke-width="1.6"/></svg>
<div class="a" style="left:2491px;top:195.2px;width:231px;height:33.8px;background:#414141;"></div>
<svg class="a" style="left:2722px;top:195.7px" width="26" height="33" viewBox="0 0 26 33"><rect x="0" y="0" width="25.5" height="33" fill="#0fad5a"/><path d="M6,12.5 L12.7,5.9 L19.4,12.5 M6,21.8 L12.7,28.4 L19.4,21.8" fill="none" stroke="#fff" stroke-width="1.6"/></svg>
<div class="a" style="left:2772px;top:111px;width:284px;height:124px;background:#1f1f1f;"></div>
<div class="a" style="left:2790px;top:136px;width:222px;height:33.5px;background:#414141;"></div>
<svg class="a" style="left:3012px;top:136.5px" width="26" height="33" viewBox="0 0 26 33"><rect x="0" y="0" width="25.5" height="33" fill="#0fad5a"/><path d="M6,12.5 L12.7,5.9 L19.4,12.5 M6,21.8 L12.7,28.4 L19.4,21.8" fill="none" stroke="#fff" stroke-width="1.6"/></svg>
<div class="a" style="left:2790px;top:195.2px;width:222px;height:33.8px;background:#414141;"></div>
<svg class="a" style="left:3012px;top:195.7px" width="26" height="33" viewBox="0 0 26 33"><rect x="0" y="0" width="25.5" height="33" fill="#0fad5a"/><path d="M6,12.5 L12.7,5.9 L19.4,12.5 M6,21.8 L12.7,28.4 L19.4,21.8" fill="none" stroke="#fff" stroke-width="1.6"/></svg>
<div class="t" style="left:2491.61px;top:115.40px;font-size:18.5px;font-weight:normal;color:#fff;transform:scale(0.9853,1.0353);">X轴:</div>
<div class="t" style="left:2491.61px;top:175.00px;font-size:18.5px;font-weight:normal;color:#fff;transform:scale(0.9853,1.0353);">Y轴:</div>
<div class="t" style="left:2790.40px;top:113.48px;font-size:22.0px;font-weight:normal;color:#fff;transform:scale(0.9867,1.0067);">Width:</div>
<div class="t" style="left:2788.20px;top:173.71px;font-size:20.0px;font-weight:normal;color:#fff;transform:scale(1.1000,0.9947);">Height:</div>
<div class="t" style="left:2576.28px;top:144.48px;font-size:19.0px;font-weight:normal;color:#fff;transform:scale(1.1222,1.0077);">0</div>
<div class="t" style="left:2576.28px;top:203.68px;font-size:19.0px;font-weight:normal;color:#fff;transform:scale(1.1222,1.0077);">0</div>
<div class="t" style="left:2871.18px;top:144.48px;font-size:19.0px;font-weight:normal;color:#fff;transform:scale(1.1222,1.0077);">0</div>
<div class="t" style="left:2871.18px;top:203.68px;font-size:19.0px;font-weight:normal;color:#fff;transform:scale(1.1222,1.0077);">0</div>
<div class="t" style="left:2473.54px;top:256.93px;font-size:22.5px;font-weight:bold;color:#fff;transform:scale(1.0626,0.9667);">ROI角点坐标</div>
<svg class="a" style="left:2628px;top:257px" width="15" height="15" viewBox="0 0 15 15"><rect x="2.5" y="2.5" width="10" height="10" fill="none" stroke="#fff" stroke-width="1.6"/><circle cx="2.5" cy="2.5" r="1.8" fill="#fff"/><circle cx="12.5" cy="2.5" r="1.8" fill="#fff"/><circle cx="2.5" cy="12.5" r="1.8" fill="#fff"/><circle cx="12.5" cy="12.5" r="1.8" fill="#fff"/></svg>
<div class="a" style="left:2473px;top:295px;width:583px;height:333px;background:#1f1f1f;"></div>
<div class="a" style="left:2537px;top:300.7px;width:489px;height:34.4px;background:#414141;"></div>
<svg class="a" style="left:3000px;top:301.9px" width="26" height="32.5" viewBox="0 0 26 32.5"><rect x="0" y="0" width="25.5" height="32.5" fill="#0fad5a"/><path d="M6,12.3 L12.7,5.8 L19.4,12.3 M6,21.4 L12.7,27.9 L19.4,21.4" fill="none" stroke="#fff" stroke-width="1.6"/></svg>
<div class="a" style="left:2537px;top:338.8px;width:489px;height:34.2px;background:#414141;"></div>
<svg class="a" style="left:3000px;top:339.7px" width="26" height="32.5" viewBox="0 0 26 32.5"><rect x="0" y="0" width="25.5" height="32.5" fill="#0fad5a"/><path d="M6,12.3 L12.7,5.8 L19.4,12.3 M6,21.4 L12.7,27.9 L19.4,21.4" fill="none" stroke="#fff" stroke-width="1.6"/></svg>
<div class="t" style="left:2731.91px;top:308.90px;font-size:20.5px;font-weight:normal;color:#fff;transform:scale(0.9870,1.0000);">X0</div>
<div class="t" style="left:2733.06px;top:347.00px;font-size:20.5px;font-weight:normal;color:#fff;transform:scale(0.9391,1.0000);">Y0</div>
<div class="a" style="left:2503px;top:378.0px;width:523px;height:2.0px;background:#353535;"></div>
<div class="a" style="left:2537px;top:383.8px;width:489px;height:34.4px;background:#414141;"></div>
<svg class="a" style="left:3000px;top:384.9px" width="26" height="32.5" viewBox="0 0 26 32.5"><rect x="0" y="0" width="25.5" height="32.5" fill="#0fad5a"/><path d="M6,12.3 L12.7,5.8 L19.4,12.3 M6,21.4 L12.7,27.9 L19.4,21.4" fill="none" stroke="#fff" stroke-width="1.6"/></svg>
<div class="a" style="left:2537px;top:421.9px;width:489px;height:34.2px;background:#414141;"></div>
<svg class="a" style="left:3000px;top:422.8px" width="26" height="32.5" viewBox="0 0 26 32.5"><rect x="0" y="0" width="25.5" height="32.5" fill="#0fad5a"/><path d="M6,12.3 L12.7,5.8 L19.4,12.3 M6,21.4 L12.7,27.9 L19.4,21.4" fill="none" stroke="#fff" stroke-width="1.6"/></svg>
<div class="t" style="left:2731.91px;top:391.90px;font-size:20.5px;font-weight:normal;color:#fff;transform:scale(0.9870,1.0000);">X0</div>
<div class="t" style="left:2733.06px;top:430.10px;font-size:20.5px;font-weight:normal;color:#fff;transform:scale(0.9391,1.0000);">Y0</div>
<div class="a" style="left:2503px;top:461.1px;width:523px;height:2.0px;background:#353535;"></div>
<div class="a" style="left:2537px;top:466.8px;width:489px;height:34.4px;background:#414141;"></div>
<svg class="a" style="left:3000px;top:468.0px" width="26" height="32.5" viewBox="0 0 26 32.5"><rect x="0" y="0" width="25.5" height="32.5" fill="#0fad5a"/><path d="M6,12.3 L12.7,5.8 L19.4,12.3 M6,21.4 L12.7,27.9 L19.4,21.4" fill="none" stroke="#fff" stroke-width="1.6"/></svg>
<div class="a" style="left:2537px;top:504.9px;width:489px;height:34.2px;background:#414141;"></div>
<svg class="a" style="left:3000px;top:505.8px" width="26" height="32.5" viewBox="0 0 26 32.5"><rect x="0" y="0" width="25.5" height="32.5" fill="#0fad5a"/><path d="M6,12.3 L12.7,5.8 L19.4,12.3 M6,21.4 L12.7,27.9 L19.4,21.4" fill="none" stroke="#fff" stroke-width="1.6"/></svg>
<div class="t" style="left:2731.91px;top:475.00px;font-size:20.5px;font-weight:normal;color:#fff;transform:scale(0.9870,1.0000);">X0</div>
<div class="t" style="left:2733.06px;top:513.10px;font-size:20.5px;font-weight:normal;color:#fff;transform:scale(0.9391,1.0000);">Y0</div>
<div class="a" style="left:2503px;top:544.1px;width:523px;height:2.0px;background:#353535;"></div>
<div class="a" style="left:2537px;top:549.9px;width:489px;height:34.3px;background:#414141;"></div>
<svg class="a" style="left:3000px;top:551.0px" width="26" height="32.5" viewBox="0 0 26 32.5"><rect x="0" y="0" width="25.5" height="32.5" fill="#0fad5a"/><path d="M6,12.3 L12.7,5.8 L19.4,12.3 M6,21.4 L12.7,27.9 L19.4,21.4" fill="none" stroke="#fff" stroke-width="1.6"/></svg>
<div class="a" style="left:2537px;top:587.9px;width:489px;height:34.2px;background:#414141;"></div>
<svg class="a" style="left:3000px;top:588.9px" width="26" height="32.5" viewBox="0 0 26 32.5"><rect x="0" y="0" width="25.5" height="32.5" fill="#0fad5a"/><path d="M6,12.3 L12.7,5.8 L19.4,12.3 M6,21.4 L12.7,27.9 L19.4,21.4" fill="none" stroke="#fff" stroke-width="1.6"/></svg>
<div class="t" style="left:2731.91px;top:558.00px;font-size:20.5px;font-weight:normal;color:#fff;transform:scale(0.9870,1.0000);">X0</div>
<div class="t" style="left:2733.06px;top:596.10px;font-size:20.5px;font-weight:normal;color:#fff;transform:scale(0.9391,1.0000);">Y0</div>
<svg class="a" style="left:2500px;top:320px" width="40" height="40" viewBox="0 0 40 40"><g fill="#e83232"><rect x="3" y="2" width="5.7" height="5.7"/><rect x="5" y="3.8" width="28" height="2.2"/><rect x="4.9" y="4" width="2.1" height="27.8"/></g></svg>
<svg class="a" style="left:2500px;top:402px" width="40" height="40" viewBox="0 0 40 40"><g fill="#e83232"><rect x="27.8" y="2.8" width="5.2" height="5.2"/><rect x="3" y="5" width="28" height="2"/><rect x="29.2" y="5" width="2.1" height="28"/></g></svg>
<svg class="a" style="left:2500px;top:485px" width="40" height="40" viewBox="0 0 40 40"><g fill="#e83232"><rect x="3" y="28" width="5.6" height="5.7"/><rect x="3" y="29.5" width="30" height="2"/><rect x="5" y="3" width="2" height="28"/></g></svg>
<svg class="a" style="left:2500px;top:568px" width="40" height="40" viewBox="0 0 40 40"><g fill="#e83232"><rect x="27.8" y="28" width="5.2" height="5.5"/><rect x="3" y="29.5" width="30" height="2"/><rect x="29.2" y="3" width="2.1" height="28"/></g></svg>
<div class="t" style="left:2472.06px;top:648.00px;font-size:23.0px;font-weight:bold;color:#fff;transform:scale(1.0692,1.0087);">ROI位置微调</div>
<svg class="a" style="left:2628px;top:650px" width="15" height="15" viewBox="0 0 15 15"><path d="M1,5 L1,1 L5,1 M10,1 L14,1 L14,5 M14,10 L14,14 L10,14 M5,14 L1,14 L1,10" fill="none" stroke="#fff" stroke-width="1.8"/></svg>
<div class="t" style="left:2473.00px;top:693.10px;font-size:23.0px;font-weight:bold;color:#fff;transform:scale(1.0420,0.9913);">批量大小设置</div>
<div class="t" style="left:2473.00px;top:722.06px;font-size:22.0px;font-weight:normal;color:#fff;transform:scale(0.9850,1.0133);">Width:</div>
<div class="t" style="left:2763.87px;top:723.48px;font-size:20.5px;font-weight:normal;color:#fff;transform:scale(1.0656,1.0105);">Height:</div>
<div class="a" style="left:2473px;top:746px;width:291px;height:34px;background:#414141;"></div>
<div class="a" style="left:2765px;top:746px;width:290px;height:34px;background:#414141;"></div>
<div class="t" style="left:2477.77px;top:754.00px;font-size:20.5px;font-weight:normal;color:#fff;transform:scale(0.9300,1.0000);">0</div>
<div class="t" style="left:2770.07px;top:754.00px;font-size:20.5px;font-weight:normal;color:#fff;transform:scale(0.9300,1.0000);">0</div>
<div class="a" style="left:2473px;top:781px;width:291px;height:33px;background:#3e3e3e;border-radius:16.5px"></div>
<div class="a" style="left:2765px;top:781px;width:290px;height:33px;background:#3e3e3e;border-radius:16.5px"></div>
<div class="t" style="left:2582.60px;top:789.00px;font-size:20.5px;font-weight:bold;color:#fff;transform:scale(1.1484,1.0048);">设置宽</div>
<div class="t" style="left:2874.50px;top:788.00px;font-size:21.0px;font-weight:bold;color:#fff;transform:scale(1.1500,1.0048);">设置高</div>
<div class="t" style="left:2473.50px;top:833.00px;font-size:18.5px;font-weight:normal;color:#fff;transform:scale(1.0000,1.0412);">调节值:</div>
<div class="a" style="left:2473px;top:855px;width:582px;height:33px;background:#414141;"></div>
<svg class="a" style="left:3030px;top:855.5px" width="21" height="32" viewBox="0 0 21 32"><rect x="0" y="0" width="20" height="32" fill="#0fad5a"/><path d="M4,12 L10,6 L16,12 M4,20 L10,26 L16,20" fill="none" stroke="#fff" stroke-width="1.6"/></svg>
<div class="t" style="left:2706.11px;top:863.16px;font-size:20.5px;font-weight:normal;color:#fff;transform:scale(0.9452,1.0143);">1 PX</div>
<div class="a" style="left:2473px;top:905px;width:583px;height:164px;background:#1f1f1f;"></div>
<svg class="a" style="left:2701px;top:923px" width="40" height="40" viewBox="0 0 40 40"><rect width="40" height="40" fill="#414141"/><path d="M16.5,25.9 L14.2,16 Q14,13.5 17.5,13.9 L26.4,18.9" fill="none" stroke="#ececec" stroke-width="1.5" stroke-linecap="round" stroke-linejoin="round"/></svg>
<svg class="a" style="left:2745px;top:923px" width="40" height="40" viewBox="0 0 40 40"><rect width="40" height="40" fill="#414141"/><path d="M9.4,25.2 L20.3,15.1 L31.4,25.2" fill="none" stroke="#ececec" stroke-width="1.5" stroke-linecap="round" stroke-linejoin="round"/></svg>
<svg class="a" style="left:2789px;top:923px" width="40" height="40" viewBox="0 0 40 40"><rect width="40" height="40" fill="#414141"/><path d="M14,19.3 L22.9,13.9 Q26.5,13.5 26.2,16.5 L23.4,26.4" fill="none" stroke="#ececec" stroke-width="1.5" stroke-linecap="round" stroke-linejoin="round"/></svg>
<svg class="a" style="left:2701px;top:967px" width="40" height="40" viewBox="0 0 40 40"><rect width="40" height="40" fill="#414141"/><path d="M24.6,9 L15,19.5 L24.6,30" fill="none" stroke="#ececec" stroke-width="1.5" stroke-linecap="round" stroke-linejoin="round"/></svg>
<svg class="a" style="left:2789px;top:967px" width="40" height="40" viewBox="0 0 40 40"><rect width="40" height="40" fill="#414141"/><path d="M15,8.5 L25,19.5 L15,31" fill="none" stroke="#ececec" stroke-width="1.5" stroke-linecap="round" stroke-linejoin="round"/></svg>
<svg class="a" style="left:2701px;top:1011px" width="40" height="40" viewBox="0 0 40 40"><rect width="40" height="40" fill="#414141"/><path d="M16.5,13.4 L14.2,23.8 Q14,27 17,26.2 L26.4,21" fill="none" stroke="#ececec" stroke-width="1.5" stroke-linecap="round" stroke-linejoin="round"/></svg>
<svg class="a" style="left:2745px;top:1011px" width="40" height="40" viewBox="0 0 40 40"><rect width="40" height="40" fill="#414141"/><path d="M9,14.6 L20.3,25.8 L31.6,14.6" fill="none" stroke="#ececec" stroke-width="1.5" stroke-linecap="round" stroke-linejoin="round"/></svg>
<svg class="a" style="left:2789px;top:1011px" width="40" height="40" viewBox="0 0 40 40"><rect width="40" height="40" fill="#414141"/><path d="M23.4,13.9 L26.2,24.3 Q26.5,27 23.4,26.4 L14,21" fill="none" stroke="#ececec" stroke-width="1.5" stroke-linecap="round" stroke-linejoin="round"/></svg>
<div class="t" style="left:2741.00px;top:1748.35px;font-size:23.5px;font-weight:bold;color:#fff;transform:scale(0.9771,0.9542);">分析</div>
<svg class="a" style="left:2px;top:1798px" width="17" height="17" viewBox="0 0 17 17"><rect width="17" height="17" fill="#1a1f2e"/><circle cx="8.5" cy="8.5" r="5" fill="none" stroke="#e07030" stroke-width="2.6"/><path d="M4,10 A5,5 0 0 0 11,13" fill="none" stroke="#5080d0" stroke-width="2.6"/><path d="M3.6,7 A5,5 0 0 1 6,4" fill="none" stroke="#a040c0" stroke-width="2.6"/></svg>
<div class="t" style="left:23.99px;top:1796.40px;font-size:22.5px;font-weight:bold;color:#fff;transform:scale(1.0079,1.0333);">RIQA-V2.6.0</div>
<div class="t" style="left:2634.19px;top:1797.00px;font-size:20.0px;font-weight:bold;color:#fff;transform:scale(1.1140,0.9905);">内存使用: 581.84 MB(1.80%)</div>
<svg class="a" style="left:2954px;top:1796px" width="21" height="21" viewBox="0 0 21 21"><rect x="1" y="1" width="19" height="19" fill="none" stroke="#1a9ee0" stroke-width="1.6"/><path d="M1,5 L20,5 M5,5 L5,16 M16,5 L16,16 M1,16 L20,16 M8,2 L8,5 M13,2 L13,5" stroke="#1a9ee0" stroke-width="1.3"/></svg>
<div class="t" style="left:2979.50px;top:1801.60px;font-size:10.5px;font-weight:bold;color:#1a9ee0;transform:scale(1.4745,0.9000);">YANDING</div>
<svg class="a" style="left:3058px;top:1808px" width="13" height="13" viewBox="0 0 13 13"><path d="M13,0 L13,13 L0,13 Z" fill="#e06020"/></svg>
<svg class="a" style="left:40px;top:8px" width="20" height="16" viewBox="0 0 20 16"><defs><linearGradient id="fg" x1="0" y1="1" x2="1" y2="0"><stop offset="0" stop-color="#18a8c8"/><stop offset="1" stop-color="#2050d0"/></linearGradient></defs><path d="M0.5,1 L7,1 L9,3 L16,3 L16,6 L3,6 L0.5,15 Z" fill="#1f5fd0"/><path d="M3,6.5 L19,6.5 L16.5,15 L0.5,15 Z" fill="url(#fg)"/></svg>
<svg class="a" style="left:190px;top:6px" width="20" height="19" viewBox="0 0 20 19"><path d="M3,17 L15,4" stroke="#2a70d8" stroke-width="3.6" stroke-linecap="round"/><path d="M3,3 L16,16" stroke="#2890d0" stroke-width="3.6" stroke-linecap="round"/><circle cx="15.5" cy="4" r="3.5" fill="none" stroke="#2a70d8" stroke-width="2.2"/></svg>
<svg class="a" style="left:322px;top:7px" width="18" height="17" viewBox="0 0 18 17"><rect x="0.5" y="4" width="17" height="13" rx="2" fill="#1e88d8"/><rect x="5.5" y="1" width="7" height="4" rx="1" fill="none" stroke="#1e70c8" stroke-width="1.6"/><rect x="0.5" y="8" width="17" height="1.5" fill="#fff"/><rect x="7.5" y="7" width="3" height="4" fill="#fff"/></svg>
<svg class="a" style="left:500px;top:6px" width="16" height="21" viewBox="0 0 16 21"><circle cx="8" cy="7" r="6.6" fill="#1e78d8"/><path d="M4.5,11 L11.5,11 L10.5,16 L5.5,16 Z" fill="#1e78d8"/><rect x="5" y="17" width="6" height="1.5" fill="#1e90c8"/><rect x="5.8" y="19" width="4.4" height="1.5" fill="#1e90c8"/><path d="M9,3 A4,4 0 0 1 12,6.5" fill="none" stroke="#fff" stroke-width="1.3"/></svg>
<svg class="a" style="left:2898px;top:7px" width="24" height="17" viewBox="0 0 24 17"><rect width="24" height="17" fill="#e81010"/><text x="12" y="12.8" text-anchor="middle" font-size="10.5" font-weight="bold" fill="#fff" font-family="Liberation Sans">CN</text></svg>
<div class="a" style="left:2951px;top:15.5px;width:10px;height:1.5px;background:#333;"></div>
<div class="a" style="left:2997px;top:11px;width:10px;height:10px;border:1.2px solid #333"></div>
<svg class="a" style="left:3042px;top:10px" width="12" height="12" viewBox="0 0 12 12"><path d="M1,1 L11,11 M11,1 L1,11" stroke="#333" stroke-width="1.3"/></svg>
<svg class="a" style="left:16px;top:37px" width="25" height="23" viewBox="0 0 25 23"><path d="M2,7 L7,7 L8.5,2 L16.5,2 L18,7 L23,7 Q24,7 24,8 L24,21 Q24,22 23,22 L2,22 Q1,22 1,21 L1,8 Q1,7 2,7 Z" fill="none" stroke="#fff" stroke-width="1.6"/><circle cx="12.5" cy="13.5" r="3.6" fill="none" stroke="#fff" stroke-width="1.6"/></svg>
<svg class="a" style="left:174px;top:38px" width="33" height="21" viewBox="0 0 33 21"><path d="M0.5,19.7 L8,0.3 L15.3,0.3 L18,19.7 L12.6,19.7 L10.4,10.5 L7,19.7 Z" fill="#fff"/><path d="M17.6,0.3 L21.5,0.3 A9.9,9.7 0 0 1 21.5,19.7 L19.8,19.7 L19.1,14.6 A4.7,4.7 0 0 0 18.3,5.2 Z" fill="#fff"/></svg>
<svg class="a" style="left:303px;top:39px" width="26" height="18" viewBox="0 0 26 18"><rect x="0.6" y="0.6" width="24.8" height="16.8" fill="none" stroke="#fff" stroke-width="1"/><rect x="1" y="1" width="8" height="8" fill="#fff"/><rect x="17" y="1" width="8" height="8" fill="#fff"/><rect x="9" y="9" width="8" height="8" fill="#fff"/></svg>
<svg class="a" style="left:481px;top:36px" width="36" height="24" viewBox="0 0 36 24"><path d="M6,12 Q5,4 10,2.5 Q22,1 31,3 Q35,4 34.5,9 Q34,13 30,14 Q20,16 10,16 Q6,16 6,12 Z" fill="none" stroke="#fff" stroke-width="1.6"/><path d="M7,9 L1,11.5 L1,23 L5,18 L9,15" fill="#fff"/></svg>
<svg class="a" style="left:633px;top:35px" width="34" height="27" viewBox="0 0 34 27"><g fill="#c8c8c8"><ellipse cx="3" cy="10" rx="1.5" ry="3.6" fill="none" stroke="#b0b0b0" stroke-width="0.9"/><circle cx="7" cy="11" r="0.8"/><circle cx="10" cy="11" r="0.8"/><circle cx="13" cy="11.2" r="0.8"/><circle cx="16" cy="11.4" r="0.8"/><circle cx="13" cy="3.4" r="0.7"/><circle cx="16" cy="4.6" r="0.8"/><circle cx="18.5" cy="6.5" r="0.8"/><circle cx="19.5" cy="10" r="0.8"/><circle cx="19.5" cy="12.5" r="0.8"/><circle cx="21" cy="14.5" r="0.9"/><circle cx="25" cy="14.5" r="0.8"/><circle cx="20" cy="18" r="0.8"/><circle cx="19" cy="21" r="0.7"/><rect x="17.3" y="23.5" width="2.6" height="3" fill="#e8e8e8"/></g><path d="M18,3 Q24,5 32,17" fill="none" stroke="#888" stroke-width="1.3"/></svg>
<svg class="a" style="left:786px;top:35px" width="26" height="26" viewBox="0 0 26 26"><defs><radialGradient id="gl"><stop offset="0" stop-color="#50d8f0" stop-opacity="0.9"/><stop offset="1" stop-color="#30b0d0" stop-opacity="0"/></radialGradient></defs><circle cx="6" cy="13" r="4" fill="url(#gl)"/><circle cx="20" cy="13" r="4" fill="url(#gl)"/><rect x="7.5" y="1.8" width="11" height="22.5" rx="3.5" fill="none" stroke="#c8d4da" stroke-width="1"/><path d="M9,8 L17,8 L17,18 L9,18 Z M6.5,9.5 L8,9.5 M18,9.5 L19.5,9.5" fill="none" stroke="#b8c4ca" stroke-width="0.9"/><path d="M13,3.5 L11,6.5 L15,6.5 Z M13,22.5 L11,19.5 L15,19.5 Z" fill="#50d0ec"/></svg>
<svg class="a" style="left:944px;top:38px" width="34" height="21" viewBox="0 0 34 21"><path d="M15.95,1.73 A9.9,9.9 0 1 0 15.95,18.87 L13.3,14.28 A4.6,4.6 0 1 1 13.3,6.32 Z" fill="#fff"/><path fill-rule="evenodd" d="M16.8,0.4 L26,0.4 A6,6 0 0 1 28,12 L33.3,20.2 L27,20.2 L22.3,12.6 L21.3,12.6 L21.3,20.2 L16.8,20.2 Z M21.3,4.8 L25.6,4.8 A2.5,2.5 0 0 1 25.6,9.3 L21.3,9.3 Z" fill="#fff"/></svg>
<div class="a" style="left:44.5px;top:596.4px;width:230.60000000000002px;height:86.80000000000007px;border:5px solid #e33d3d"></div>
<div class="a" style="left:67.4px;top:1709.2px;width:420.5px;height:84.09999999999991px;border:5px solid #e33d3d"></div>
<div class="a" style="left:2488px;top:43px;width:567px;height:1038px;border:5px solid #e33d3d"></div>
<div class="a" style="left:2539.2px;top:1707px;width:481.4000000000001px;height:96.40000000000009px;border:5px solid #e33d3d"></div>
</body></html>
